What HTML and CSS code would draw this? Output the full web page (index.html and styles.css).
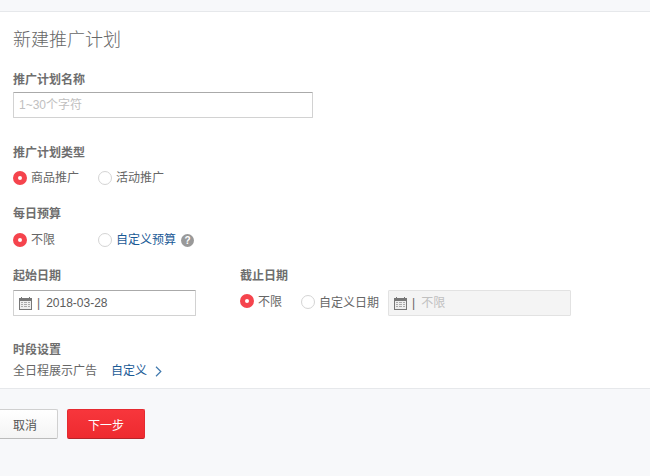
FILE: index.html
```html
<!DOCTYPE html>
<html lang="zh">
<head>
<meta charset="utf-8">
<title>新建推广计划</title>
<link rel="stylesheet" href="styles.css">
</head>
<body>
<div class="topbar"></div>
<main class="content">
  <h1 class="title">新建推广计划</h1>

  <section class="field name-field">
    <div class="label">推广计划名称</div>
    <div class="input name-input"><span class="placeholder">1~30个字符</span></div>
  </section>

  <section class="field type-field">
    <div class="label">推广计划类型</div>
    <div class="radios">
      <span class="radio on"></span><span class="rtext w-first">商品推广</span>
      <span class="radio"></span><span class="rtext">活动推广</span>
    </div>
  </section>

  <section class="field budget-field">
    <div class="label">每日预算</div>
    <div class="radios budget-radios">
      <span class="radio on"></span><span class="rtext w-first">不限</span>
      <span class="radio"></span><span class="rtext link">自定义预算</span>
      <span class="help">?</span>
    </div>
  </section>

  <section class="dates">
    <div class="date-start">
      <div class="label">起始日期</div>
      <div class="input date-input">
        <svg class="cal" viewBox="0 0 13 13"><path fill="#777" d="M0 1h2V0h1v1h7V0h1v1h2v12H0z"/><path fill="#eee" d="M1 4h11v8H1z"/><path fill="#aaa" d="M2 5h2v1H2zm3 0h3v1H5zm4 0h2v1H9zM2 7h2v1H2zm3 0h3v1H5zm4 0h2v1H9zM2 9h2v1H2zm3 0h3v1H5zm4 0h2v1H9z"/></svg>
        <span class="sep">|</span><span class="date-val">2018-03-28</span>
      </div>
    </div>
    <div class="date-end">
      <div class="label">截止日期</div>
      <div class="end-row">
        <span class="radio on end-on"></span><span class="rtext end-first">不限</span>
        <span class="radio end-off"></span><span class="rtext end-second">自定义日期</span>
        <div class="input disabled-input">
          <svg class="cal" viewBox="0 0 13 13"><path fill="#777" d="M0 1h2V0h1v1h7V0h1v1h2v12H0z"/><path fill="#eee" d="M1 4h11v8H1z"/><path fill="#aaa" d="M2 5h2v1H2zm3 0h3v1H5zm4 0h2v1H9zM2 7h2v1H2zm3 0h3v1H5zm4 0h2v1H9zM2 9h2v1H2zm3 0h3v1H5zm4 0h2v1H9z"/></svg>
          <span class="sep">|</span><span class="placeholder">不限</span>
        </div>
      </div>
    </div>
  </section>

  <section class="field time-field">
    <div class="label">时段设置</div>
    <div class="time-row">
      <span class="rtext">全日程展示广告</span>
      <span class="rtext link custom">自定义</span>
      <svg class="chev" viewBox="0 0 7 11"><path fill="none" stroke="#3f78ad" stroke-width="1.2" d="M1 .8 5.8 5.5 1 10.2"/></svg>
    </div>
  </section>
</main>
<footer class="footer">
  <button class="btn cancel">取消</button>
  <button class="btn next">下一步</button>
</footer>
</body>
</html>
```
FILE: styles.css
```css
* { box-sizing: border-box; }
html, body { margin: 0; padding: 0; }
body {
  width: 650px; height: 476px; overflow: hidden;
  background: #fff; color: #666;
  font-family: "Liberation Sans", "Noto Sans CJK SC", sans-serif;
  font-size: 12px; line-height: 16px;
}
.topbar { height: 12px; background: #f7f8fa; border-bottom: 1px solid #e6e8eb; }
.content { height: 376px; padding: 16px 0 0 13px; }
.title { margin: 0; font-size: 18px; line-height: 24px; font-weight: 300; color: #666; height: 24px; }
.label { font-weight: 700; color: #6e6e6e; font-size: 12px; line-height: 16px; }
.field { display: block; }
.name-field { margin-top: 20px; }
.input { border: 1px solid #d2d2d2; border-top-color: #aaa; border-radius: 1px; background: #fff; display: flex; align-items: center; }
.name-input { width: 300px; height: 26px; margin-top: 4px; padding-left: 5px; }
.placeholder { color: #c0c0c0; }
.type-field { margin-top: 27px; }
.radios { display: flex; align-items: center; height: 16px; margin-top: 9px; }
.budget-radios { margin-top: 10px; }
.radio { width: 14px; height: 14px; border-radius: 50%; border: 1px solid #d4d4d4; background: #fff; flex: none; }
.radio.on { border: 5px solid #f5444d; background: #fff; }
.rtext { margin-left: 4px; color: #666; white-space: nowrap; }
.w-first { width: 67px; }
.link { color: #1a5a96; }
.budget-field { margin-top: 20px; }
.help { width: 13px; height: 13px; border-radius: 50%; background: #999; color: #fff; font-size: 10px; font-weight: 700; line-height: 13px; text-align: center; margin-left: 5px; }
.dates { display: flex; margin-top: 20px; }
.date-start { width: 227px; }
.date-input { width: 183px; height: 26px; margin-top: 6px; padding-left: 5px; }
.cal { width: 13px; height: 13px; flex: none; }
.sep { margin: 0 6px 0 5px; color: #666; }
.date-val { color: #5c5c5c; }
.end-row { display: flex; align-items: center; margin-top: 6px; height: 26px; }
.end-on { position: relative; top: -2px; }
.end-off { position: relative; top: -1px; }
.end-first { width: 43px; margin-left: 4px; position: relative; top: -1px; }
.end-second { width: 65px; margin-left: 4px; }
.disabled-input { width: 183px; height: 26px; margin-left: 4px; padding-left: 5px; background: #f4f4f4; border-color: #e2e2e2; }
.time-field { margin-top: 26px; }
.time-row { display: flex; align-items: center; margin-top: 5px; height: 16px; }
.time-row .rtext { margin-left: 0; }
.time-row .custom { margin-left: 14px; }
.chev { width: 7px; height: 11px; margin-left: 8px; }
.footer { height: 88px; background: #f7f8fa; border-top: 1px solid #e6e8eb; padding-top: 20px; display: flex; align-items: flex-start; font-size: 12px; }
.btn { font-family: inherit; font-size: 12px; height: 30px; padding: 0; border-radius: 2px; }
.cancel { width: 68px; margin-left: -10px; padding-left: 2px; color: #555; background: linear-gradient(#fff, #f4f4f4); border: 1px solid #d0d0d0; border-bottom-color: #bbb; }
.next { width: 78px; margin-left: 9px; color: #fff; background: linear-gradient(#f7363c, #ee2a2f); border: 1px solid #e52a30; border-bottom-color: #b5242a; }
```
